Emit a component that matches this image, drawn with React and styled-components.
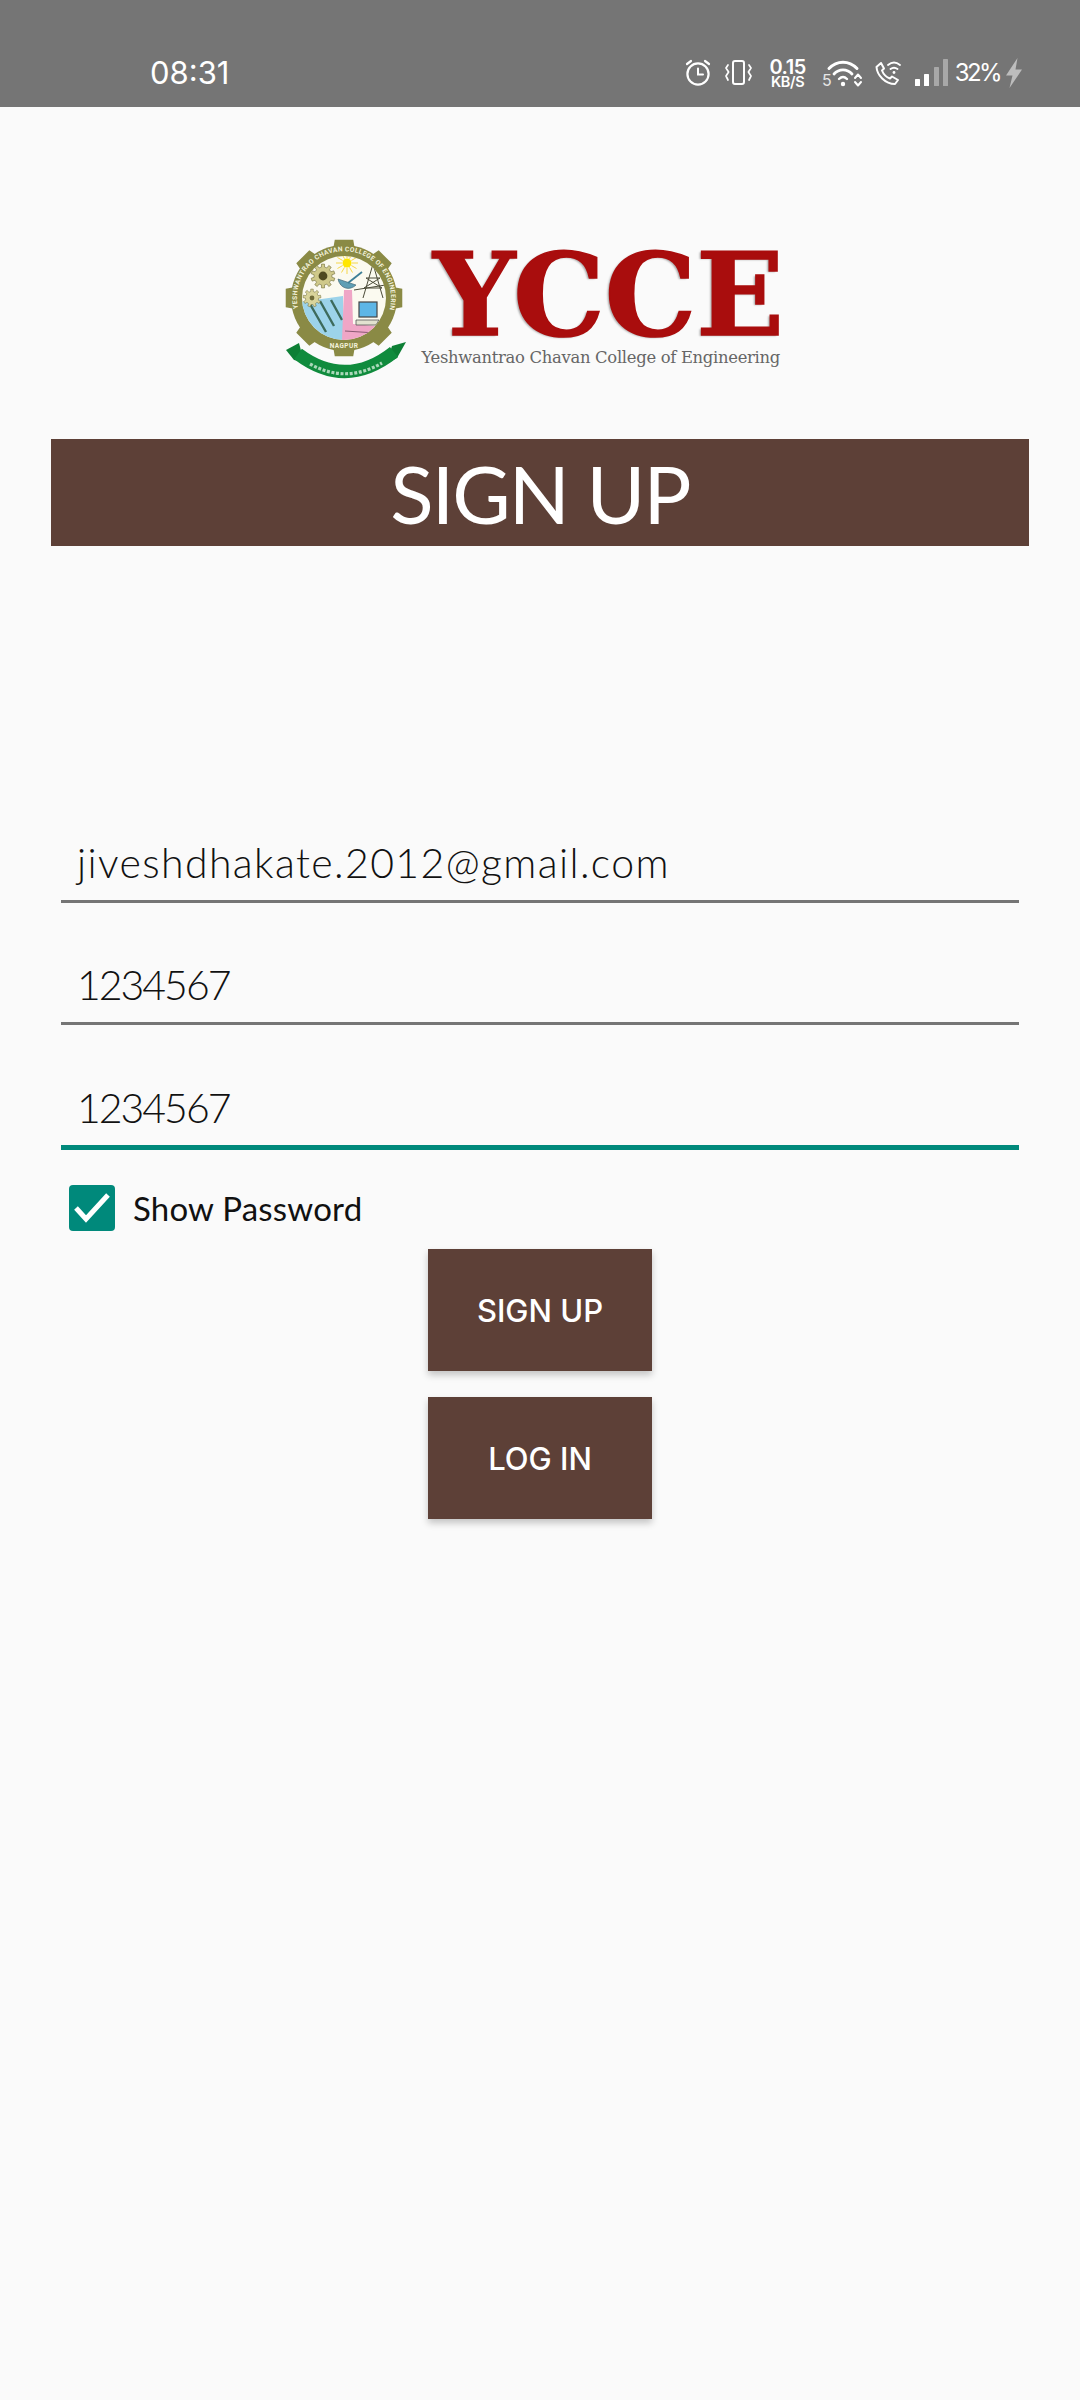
import React from "react";
import styled, { createGlobalStyle } from "styled-components";

const Global = createGlobalStyle`
  html, body { margin: 0; padding: 0; background: #fafafa; }
  * { box-sizing: border-box; }
`;

const Page = styled.div`
  width: 1080px;
  height: 2400px;
  background: #fafafa;
  font-family: "Lato", "Liberation Sans", sans-serif;
  overflow: hidden;
`;

const StatusBar = styled.header`
  height: 107px;
  background: #757575;
  padding: 38px 58px 0 150px;
  display: flex;
  align-items: center;
  justify-content: space-between;
  color: #fff;
  font-family: "Inter", "Liberation Sans", sans-serif;
`;

const Time = styled.span`
  font-size: 31px;
  font-weight: 400;
  letter-spacing: 0;
  line-height: 1;
`;

const StatusIcons = styled.div`
  display: flex;
  align-items: center;
`;

const StatusIcon = styled.svg`
  display: block;
  flex: none;
  overflow: visible;
  margin-left: ${(p) => p.$ml || 0}px;
`;

const Speed = styled.div`
  margin-left: 17px;
  display: flex;
  flex-direction: column;
  align-items: center;
  font-weight: 600;
`;

const SpeedValue = styled.span`
  font-size: 20px;
  letter-spacing: -0.5px;
  line-height: 18px;
`;

const SpeedUnit = styled.span`
  font-size: 14.5px;
  letter-spacing: -0.3px;
  line-height: 12px;
`;

const Battery = styled.span`
  margin-left: 7px;
  font-size: 24px;
  font-weight: 400;
  letter-spacing: -2.6px;
  line-height: 1;
`;

const Main = styled.main`
  padding: 0 51px;
  display: flex;
  flex-direction: column;
`;

const Logo = styled.div`
  align-self: flex-start;
  margin: 131px 0 0 233px;
  height: 201px;
  display: flex;
  align-items: flex-start;
`;

const Seal = styled.svg`
  display: block;
  flex: none;
  overflow: visible;
`;

const Wordmark = styled.div`
  margin: 15px 0 0 10px;
  width: 363px;
  display: flex;
  flex-direction: column;
  align-items: flex-end;
`;

const WordmarkTitle = styled.div`
  margin-right: -3px;
  font-family: "DejaVu Serif", "Liberation Serif", serif;
  font-weight: 700;
  font-size: 115px;
  line-height: 84px;
  letter-spacing: 0;
  color: #a90d0d;
  -webkit-text-stroke: 1.6px #a90d0d;
  text-shadow: -2px 1px 2px rgba(0, 0, 0, 0.32);
`;

const WordmarkTag = styled.div`
  margin: 11px 1px 0 0;
  font-family: "DejaVu Serif", "Liberation Serif", serif;
  font-size: 16.4px;
  line-height: 20px;
  white-space: nowrap;
  color: #666;
  letter-spacing: -0.3px;
`;

const TitleBar = styled.h1`
  margin: 0;
  height: 107px;
  background: #5d4037;
  color: #fff;
  display: flex;
  align-items: center;
  justify-content: center;
  font-size: 80px;
  font-weight: 400;
  letter-spacing: -1.9px;
`;

const Form = styled.form`
  margin: 235px 10px 0;
  display: flex;
  flex-direction: column;
`;

const Field = styled.div`
  height: ${(p) => (p.$focused ? 125 : 122)}px;
  padding: 0 0 13px 16px;
  display: flex;
  align-items: flex-end;
  border-bottom: ${(p) => (p.$focused ? "5px solid #00897b" : "3px solid #757575")};
  color: #111;
  font-size: 41px;
  font-weight: 300;
  line-height: 48px;
  letter-spacing: ${(p) => p.$spacing || 0}px;
`;

const CheckRow = styled.label`
  margin: 35px 0 0 8px;
  display: flex;
  align-items: center;
  gap: 18px;
  font-size: 33px;
  font-weight: 400;
  color: #111;
  letter-spacing: 0.2px;
  line-height: 46px;
`;

const CheckBox = styled.span`
  width: 46px;
  height: 46px;
  background: #00897b;
  border-radius: 4px;
  display: flex;
  align-items: center;
  justify-content: center;
`;

const Buttons = styled.div`
  margin-top: 18px;
  display: flex;
  flex-direction: column;
  align-items: center;
  gap: 26px;
`;

const Button = styled.button`
  width: 224px;
  height: 122px;
  border: none;
  background: #5d4037;
  color: #fff;
  font-family: "Inter", "Liberation Sans", sans-serif;
  font-size: 31px;
  font-weight: 500;
  box-shadow: 0 4px 7px rgba(0, 0, 0, 0.22);
`;

function gearPath(cx, cy, rOut, rIn, teeth) {
  const pts = [];
  const step = (Math.PI * 2) / teeth;
  for (let i = 0; i < teeth; i++) {
    const a = i * step - Math.PI / 2;
    const w = step * 0.2;
    const p = (r, t) => `${(cx + r * Math.cos(t)).toFixed(2)} ${(cy + r * Math.sin(t)).toFixed(2)}`;
    pts.push(p(rIn, a - w * 1.4), p(rOut, a - w), p(rOut, a + w), p(rIn, a + w * 1.4));
  }
  return "M" + pts.join("L") + "Z";
}

const SealMark = () => (
  <Seal width="124" height="146" viewBox="0 0 124 146">
    <defs>
      <path id="ring" d="M 14.5 72 A 47 47 0 1 1 105.5 72" />
      <clipPath id="inner"><circle cx="60" cy="60" r="42" /></clipPath>
    </defs>
    <path d={gearPath(60, 60, 59, 50, 8)} fill="#8a8a45" />
    <circle cx="60" cy="60" r="53" fill="#8a8a45" />
    <circle cx="60" cy="60" r="42" fill="#fbfaf0" />
    <text fontFamily="Roboto, sans-serif" fontSize="6.6" fontWeight="700" fill="#f3f2dc" letterSpacing="0.35">
      <textPath href="#ring" startOffset="1%">YESHWANTRAO CHAVAN COLLEGE OF ENGINEERING</textPath>
    </text>
    <text x="60" y="110" textAnchor="middle" fontFamily="Roboto, sans-serif" fontSize="6.5" fontWeight="700" fill="#f3f2dc" letterSpacing="0.4">NAGPUR</text>
    <g clipPath="url(#inner)">
      <path d="M16 64 L59 58 L60 102 L28 102 Z" fill="#9cd3ea" />
      <path d="M26 66 L42 94 M36 63 L50 88 M47 62 L58 82" stroke="#3d6b5c" strokeWidth="2.4" />
      <path d="M60 52 L68 52 L69 86 L92 88 L94 102 L58 102 Z" fill="#efa6c6" />
      <path d="M61 93 L92 95" stroke="#8a5a72" strokeWidth="1" />
      <path d={gearPath(39, 38, 12, 9, 10)} fill="#cfc98a" stroke="#6f6b38" strokeWidth="0.6" />
      <circle cx="39" cy="38" r="4.4" fill="#4f4a20" />
      <path d={gearPath(28, 60, 9, 6.6, 9)} fill="#d9d49b" stroke="#6f6b38" strokeWidth="0.5" />
      <circle cx="28" cy="60" r="2.4" fill="#6f6b38" />
      <g stroke="#f5d64a" strokeWidth="1">
        {Array.from({ length: 12 }, (_, i) => {
          const t = (i * Math.PI) / 6;
          return <line key={i} x1={63 + 5 * Math.cos(t)} y1={25 + 5 * Math.sin(t)} x2={63 + 11 * Math.cos(t)} y2={25 + 11 * Math.sin(t)} />;
        })}
      </g>
      <circle cx="63" cy="25" r="4.5" fill="#ffe600" />
      <path d="M54 41 C56 51 66 53 72 47 Z" fill="#5f9fb4" stroke="#3d5e6c" strokeWidth="0.6" />
      <path d="M64 45 L78 34" stroke="#3d7f96" strokeWidth="1.8" />
      <path d="M89 26 L79 60 M89 26 L99 60 M82 40 L96 40 M80 50 L98 50 M82 40 L98 50 M96 40 L80 50 M70 52 L108 46" stroke="#4b4b38" strokeWidth="1" fill="none" />
      <rect x="75" y="64" width="18" height="15" fill="#5db6e6" stroke="#444" strokeWidth="1.2" />
      <path d="M72 82 L95 82 L92 87 L72 87 Z" fill="#e2e2d0" stroke="#555" strokeWidth="0.8" />
    </g>
    <path d="M2 112 L15 105 L20 124 L10 122 Z" fill="#0d7f35" />
    <path d="M122 104 L108 108 L102 126 L113 120 Z" fill="#0d7f35" />
    <path d="M14 116 Q62 152 110 114" fill="none" stroke="#108b3d" strokeWidth="13" />
    <path d="M26 126 Q62 146 98 125" fill="none" stroke="#dff2e3" strokeWidth="3.2" strokeDasharray="3 1.6" opacity="0.75" />
  </Seal>
);

const Alarm = () => (
  <StatusIcon width="26" height="27" viewBox="0 0 26 27" fill="none" stroke="#fff" strokeWidth="2.2" strokeLinecap="round">
    <circle cx="13" cy="15" r="10.6" />
    <path d="M13 9.5V15.5H18" strokeWidth="2" />
    <path d="M2 5L6 2M24 5L20 2" />
  </StatusIcon>
);

const Vibrate = () => (
  <StatusIcon $ml={14} width="27" height="25" viewBox="0 0 27 25" fill="none" stroke="#fff" strokeWidth="2" strokeLinecap="round" strokeLinejoin="round">
    <rect x="8" y="1" width="11" height="23" rx="2" />
    <path d="M3 5L1 8L3.6 12L1 16L3 20M24 5L26 8L23.4 12L26 16L24 20" strokeWidth="1.7" />
  </StatusIcon>
);

const WifiFive = () => (
  <StatusIcon $ml={16} width="41" height="28" viewBox="0 0 41 28" fill="none" stroke="#fff" strokeLinecap="round">
    <text x="0" y="27" fontFamily="Inter, sans-serif" fontSize="16" fill="#e6e6e6" stroke="none">5</text>
    <path d="M7 9.5C15 1 27 1 35 9.5" strokeWidth="3" />
    <path d="M12 15C17 9.5 25 9.5 30 15" strokeWidth="2.8" />
    <path d="M17 20C19.5 17.5 22.5 17.5 25 20" strokeWidth="2.4" />
    <circle cx="21" cy="25" r="2.2" fill="#fff" stroke="none" />
    <path d="M33 19L36 15.5L39 19M33 23L36 26.5L39 23" strokeWidth="2" strokeLinejoin="round" />
  </StatusIcon>
);

const WifiCall = () => (
  <StatusIcon $ml={12} width="26" height="24" viewBox="0 0 26 24" fill="none" stroke="#fff" strokeLinecap="round" strokeLinejoin="round">
    <path d="M2 5.5L6 2L9 7.5L7 9.5C8.5 13.5 11 16 15 17.5L17 15.5L23 19L20 23C10 23 2 14 1.5 6Z" strokeWidth="2" />
    <path d="M13 4C17 .8 21 .8 25 4" strokeWidth="1.9" />
    <path d="M15.5 8C17.8 6.3 20.2 6.3 22.5 8" strokeWidth="1.9" />
    <circle cx="19" cy="11.5" r="1.4" fill="#fff" stroke="none" />
  </StatusIcon>
);

const Signal = () => (
  <StatusIcon $ml={14} width="33" height="27" viewBox="0 0 33 27">
    <rect x="0" y="20" width="5" height="7" rx="0.6" fill="#fff" />
    <rect x="9" y="15" width="5" height="12" rx="0.6" fill="#fff" />
    <rect x="19" y="8" width="5" height="19" rx="0.6" fill="#a8a8a8" />
    <rect x="28" y="0" width="5" height="27" rx="0.6" fill="#a8a8a8" />
  </StatusIcon>
);

const Bolt = () => (
  <StatusIcon $ml={6} width="16" height="30" viewBox="0 0 16 30">
    <path d="M11.5 0L0 17.5H6.5L3.5 30L16 11.5H9.5Z" fill="#bdbdbd" />
  </StatusIcon>
);

const Check = () => (
  <svg width="36" height="30" viewBox="0 0 36 30" fill="none">
    <path d="M2 15L12 26L34 2" stroke="#fff" strokeWidth="5" />
  </svg>
);

export default function App() {
  return (
    <Page>
      <Global />
      <StatusBar>
        <Time>08:31</Time>
        <StatusIcons>
          <Alarm />
          <Vibrate />
          <Speed>
            <SpeedValue>0.15</SpeedValue>
            <SpeedUnit>KB/S</SpeedUnit>
          </Speed>
          <WifiFive />
          <WifiCall />
          <Signal />
          <Battery>32%</Battery>
          <Bolt />
        </StatusIcons>
      </StatusBar>
      <Main>
        <Logo>
          <SealMark />
          <Wordmark>
            <WordmarkTitle>YCCE</WordmarkTitle>
            <WordmarkTag>Yeshwantrao Chavan College of Engineering</WordmarkTag>
          </Wordmark>
        </Logo>
        <TitleBar>SIGN UP</TitleBar>
        <Form>
          <Field $spacing={1.38}>jiveshdhakate.2012@gmail.com</Field>
          <Field $spacing={-2}>1234567</Field>
          <Field $spacing={-2} $focused>1234567</Field>
          <CheckRow>
            <CheckBox><Check /></CheckBox>
            Show Password
          </CheckRow>
          <Buttons>
            <Button type="button">SIGN UP</Button>
            <Button type="button">LOG IN</Button>
          </Buttons>
        </Form>
      </Main>
    </Page>
  );
}
